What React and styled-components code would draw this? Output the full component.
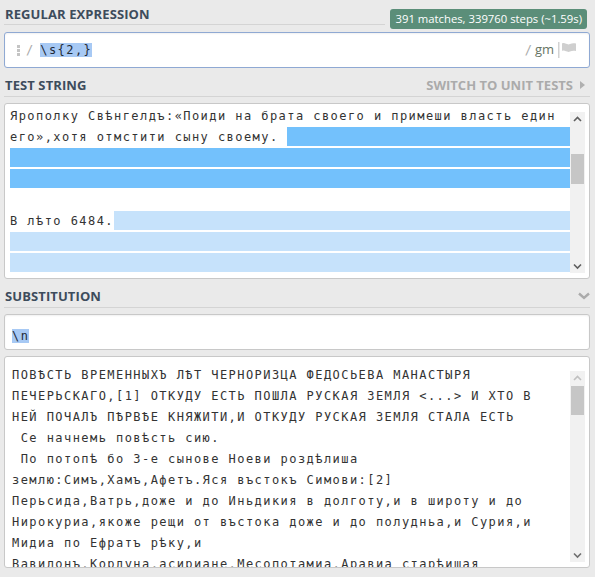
import React from 'react';
import styled, { createGlobalStyle } from 'styled-components';

const GlobalStyle = createGlobalStyle`
    html, body {
        margin: 0;
        padding: 0;
        background: #eaeaea;
    }
    * {
        box-sizing: border-box;
    }
`;

const MONO = `'DejaVu Sans Mono', 'Liberation Mono', monospace`;
const SANS = `'Open Sans', 'Noto Sans', sans-serif`;

const testLines = [
    { text: 'Ярополку Свѣнгелдъ:«Поиди на брата своего и примеши власть един' },
    { text: 'его»,хотя отмстити сыну своему. ', mark: 'strong' },
    { text: '', mark: 'strong' },
    { text: '', mark: 'strong' },
    { text: '' },
    { text: 'В лѣто 6484.', mark: 'soft' },
    { text: '', mark: 'soft' },
    { text: '', mark: 'soft' },
];

const resultLines = [
    'ПОВѢСТЬ ВРЕМЕННЫХЪ ЛѢТ ЧЕРНОРИЗЦА ФЕДОСЬЕВА МАНАСТЫРЯ',
    'ПЕЧЕРЬСКАГО,[1] ОТКУДУ ЕСТЬ ПОШЛА РУСКАЯ ЗЕМЛЯ <...> И ХТО В',
    'НЕЙ ПОЧАЛЪ ПѢРВѢЕ КНЯЖИТИ,И ОТКУДУ РУСКАЯ ЗЕМЛЯ СТАЛА ЕСТЬ',
    ' Се начнемь повѣсть сию.',
    ' По потопѣ бо 3-е сынове Ноеви роздѣлиша',
    'землю:Симъ,Хамъ,Афетъ.Яся въстокъ Симови:[2]',
    'Перьсида,Ватрь,доже и до Иньдикия в долготу,и в широту и до',
    'Нирокуриа,якоже рещи от въстока доже и до полудньа,и Сурия,и',
    'Мидиа по Ефратъ рѣку,и',
    'Вавилонъ,Кордуна,асириане,Месопотамиа,Аравиа старѣишая',
];

function Chevron({ dir = 'down', color = '#6f6f6f' }) {
    const pts = dir === 'up' ? '1,5 4.5,1.5 8,5' : '1,1.5 4.5,5 8,1.5';
    return (
        <svg width="9" height="7" viewBox="0 0 9 7">
            <polyline points={pts} fill="none" stroke={color} strokeWidth="1.6" />
        </svg>
    );
}

function Scrollbar({ thumbOffset, thumbHeight, upColor, downColor }) {
    return (
        <ScrollTrack>
            <ArrowBtn><Chevron dir="up" color={upColor} /></ArrowBtn>
            <ThumbArea $offset={thumbOffset}>
                <Thumb $height={thumbHeight} />
            </ThumbArea>
            <ArrowBtn><Chevron dir="down" color={downColor} /></ArrowBtn>
        </ScrollTrack>
    );
}

function App() {
    return (
        <Page>
            <GlobalStyle />

            <HeaderRow $height={25}>
                <HeaderTitle $ruled>REGULAR EXPRESSION</HeaderTitle>
                <Badge>391 matches, 339760 steps (~1.59s)</Badge>
            </HeaderRow>

            <RegexBox $focused $gap={7}>
                <Handle>
                    <i /><i /><i />
                </Handle>
                <Delim>/</Delim>
                <Code><Selected>\s{'{'}2,{'}'}</Selected></Code>
                <Spacer />
                <Delim>/</Delim>
                <Flags>gm</Flags>
                <svg width="20" height="16" viewBox="0 0 20 16">
                    <rect x="0" y="0" width="1.5" height="16" fill="#d2d2d2" />
                    <path d="M4 1.5 C7 0 9 3.5 12 2 C14 1 16 1 18 1.5 L18 9 C16 8.5 14 8.5 12 9.5 C9 11 7 7.5 4 9 Z" fill="#cfcfcf" />
                </svg>
            </RegexBox>

            <HeaderRow $height={29} $line>
                <HeaderTitle>TEST STRING</HeaderTitle>
                <HeaderAction>
                    SWITCH TO UNIT TESTS
                    <svg width="5" height="8" viewBox="0 0 5 8">
                        <polygon points="0,0 5,4 0,8" fill="#b0b0b0" />
                    </svg>
                </HeaderAction>
            </HeaderRow>

            <TextPanel $height={176} $padTop={2} $padLeft={5}>
                <Lines>
                    {testLines.map((line, i) => (
                        <Line key={i}>
                            <LineText>{line.text}</LineText>
                            {line.mark && <Mark $kind={line.mark} />}
                        </Line>
                    ))}
                </Lines>
                <Scrollbar thumbOffset={28} thumbHeight={30} upColor="#5f5f5f" downColor="#5f5f5f" />
            </TextPanel>

            <HeaderRow $height={29} $line>
                <HeaderTitle>SUBSTITUTION</HeaderTitle>
                <Collapse width="12" height="8" viewBox="0 0 12 8">
                    <polyline points="1,1.5 6,6 11,1.5" fill="none" stroke="#ababab" strokeWidth="2.4" />
                </Collapse>
            </HeaderRow>

            <RegexBox $gap={6} $sub>
                <Code><Selected>\n</Selected></Code>
            </RegexBox>

            <TextPanel $height={212} $padTop={8} $padLeft={7}>
                <Lines>
                    {resultLines.map((line, i) => (
                        <Line key={i}>
                            <LineText>{line}</LineText>
                        </Line>
                    ))}
                </Lines>
                <Scrollbar thumbOffset={1} thumbHeight={29} upColor="#c0c0c0" downColor="#6f6f6f" />
            </TextPanel>
        </Page>
    );
}

const Page = styled.div`
    width: 595px;
    height: 577px;
    overflow: hidden;
    padding: 0 5px 0 4px;
    background: #eaeaea;
    font-family: ${SANS};
`;

const HeaderRow = styled.div`
    height: ${p => p.$height}px;
    display: flex;
    align-items: flex-end;
    justify-content: space-between;
    border-bottom: ${p => (p.$line ? '1px solid #d4d4d4' : 'none')};
`;

const HeaderTitle = styled.h2`
    margin: 0;
    flex: 1;
    align-self: stretch;
    display: flex;
    align-items: flex-end;
    padding: 0 0 ${p => (p.$ruled ? 2 : 3)}px 1px;
    font-size: 13px;
    line-height: 16px;
    font-weight: 700;
    color: #3d4c5c;
    letter-spacing: 0.1px;
    border-bottom: ${p => (p.$ruled ? '1px solid #d4d4d4' : 'none')};
`;

const Badge = styled.div`
    height: 20px;
    margin: 0 3px -4px 5px;
    padding: 0 5px;
    border-radius: 3px;
    background: #5b8e79;
    color: #fff;
    font-size: 11.3px;
    line-height: 20px;
    white-space: nowrap;
`;

const HeaderAction = styled.div`
    display: flex;
    align-items: center;
    gap: 7px;
    padding: 0 5px 3px 0;
    font-size: 13px;
    line-height: 16px;
    font-weight: 700;
    color: #ababab;
`;

const Collapse = styled.svg`
    margin: 0 0 7px;
`;

const RegexBox = styled.div`
    margin-top: ${p => p.$gap}px;
    height: 36px;
    display: flex;
    align-items: center;
    padding: ${p => (p.$sub ? '7px 0 0 7px' : '0 11px 0 12px')};
    background: #fff;
    border: 1px solid ${p => (p.$focused ? '#8fa9d3' : '#c8c8c8')};
    border-radius: 3px;
    box-shadow: inset 0 1px 2px rgba(0, 0, 0, 0.06);
`;

const Handle = styled.span`
    display: flex;
    flex-direction: column;
    gap: 1px;
    margin-right: 6px;

    i {
        display: block;
        width: 3px;
        height: 3px;
        background: #c4c4c4;
    }
`;

const Delim = styled.span`
    font-family: ${MONO};
    font-size: 12px;
    color: #a9a9a9;
    margin-right: 7px;
`;

const Code = styled.span`
    font-family: ${MONO};
    font-size: 12px;
    letter-spacing: 1.44px;
    color: #1f2a37;
    white-space: pre;
`;

const Selected = styled.span`
    display: inline-block;
    line-height: 14px;
    background: #a7c9f4;
`;

const Spacer = styled.span`
    flex: 1;
`;

const Flags = styled.span`
    font-size: 13px;
    color: #677565;
    margin: 0 4px 2px -4px;
`;

const TextPanel = styled.div`
    margin-top: 6px;
    height: ${p => p.$height}px;
    display: flex;
    padding: ${p => p.$padTop}px 4px 0 ${p => p.$padLeft}px;
    background: #fff;
    border: 1px solid #c8c8c8;
    border-radius: 3px;
    overflow: hidden;
`;

const Lines = styled.div`
    flex: 1;
    min-width: 0;
    overflow: hidden;
`;

const Line = styled.div`
    height: 21px;
    display: flex;
    align-items: flex-start;
`;

const LineText = styled.span`
    font-family: ${MONO};
    font-size: 12px;
    line-height: 21px;
    letter-spacing: 1.44px;
    color: #333;
    white-space: pre;
`;

const Mark = styled.span`
    flex: 1;
    height: 19px;
    background: ${p => (p.$kind === 'strong' ? '#73c1fc' : '#c6e2fb')};
`;

const ScrollTrack = styled.div`
    width: 15px;
    margin: 6px 0 5px;
    display: flex;
    flex-direction: column;
    background: #f1f1f1;
    align-self: stretch;
    max-height: 200px;
`;

const ArrowBtn = styled.div`
    height: 14px;
    display: flex;
    align-items: center;
    justify-content: center;
`;

const ThumbArea = styled.div`
    flex: 1;
    padding: ${p => p.$offset}px 1px 0;
`;

const Thumb = styled.div`
    height: ${p => p.$height}px;
    background: #c6c6c6;
`;

export default App;
